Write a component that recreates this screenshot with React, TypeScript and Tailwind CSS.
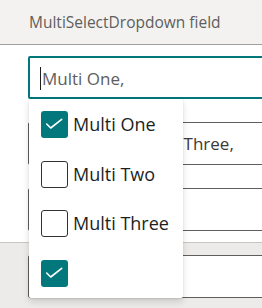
import * as React from "react";

type RowProps = {
    text?: string;
    focused?: boolean;
    indent?: string;
};

function Row({ text = "", focused = false, indent = "pl-[11px]" }: RowProps) {
    return (
        <div className="flex items-center">
            <div className="h-[40px] w-px bg-[#605e5c]" />
            <div
                className={
                    focused
                        ? "ml-[28px] flex h-[43px] w-[260px] shrink-0 items-center rounded-[2px] border-2 border-[#03787c] bg-white pl-[10px] pt-[3px]"
                        : "ml-[28px] flex h-[43px] w-[260px] shrink-0 items-center rounded-[2px] border border-[#605e5c] bg-white pt-[1px] " +
                          indent
                }
            >
                {focused && <span className="mb-[2px] h-[23px] w-px bg-[#201f1e]" />}
                <span
                    className={
                        focused
                            ? "ml-[1px] whitespace-nowrap text-[17px] text-[#605e5c]"
                            : "whitespace-nowrap text-[17px] text-[#3b3a39]"
                    }
                >
                    {text}
                </span>
            </div>
        </div>
    );
}

function Check({ checked, label }: { checked?: boolean; label?: string }) {
    return (
        <div className="flex h-[27px] items-center gap-[5px]">
            {checked ? (
                <div className="h-[27px] w-[27px] rounded-[3px] bg-[#03787c]">
                    <svg viewBox="0 0 27 27" className="h-[27px] w-[27px]" fill="none">
                        <path
                            d="M5.7 13 L9.7 17 L20.7 8.3"
                            stroke="white"
                            strokeWidth={1.6}
                            strokeLinecap="round"
                            strokeLinejoin="round"
                        />
                    </svg>
                </div>
            ) : (
                <div className="h-[27px] w-[27px] rounded-[3px] border border-[#323130] bg-white" />
            )}
            {label && (
                <span className="whitespace-nowrap text-[18px] text-[#201f1e]">{label}</span>
            )}
        </div>
    );
}

export default function App() {
    return (
        <div className="relative h-[308px] w-[262px] overflow-hidden bg-white font-['Open_Sans',sans-serif]">
            <div className="flex h-[45px] items-center border-b border-[#a19f9d] bg-[#f3f2f1] pl-[29px] pt-[1px] text-[15.5px] text-[#605e5c]">
                MultiSelectDropdown field
            </div>
            <div className="flex flex-col gap-[23px] pb-[11px] pt-[11px]">
                <Row focused text="Multi One," />
                <Row text="Multi One, Multi Three," indent="pl-[23px]" />
                <Row />
            </div>
            <div className="h-[66px] border-t border-[#c8c6c4] bg-[#edebe9] pt-[12px]">
                <Row />
            </div>

            {/* dropdown panel over the rows */}
            <div className="absolute left-[29px] top-[99px] flex h-[199px] w-[154px] flex-col gap-[22.67px] rounded-[2px] bg-white pl-[12px] pt-[12px] shadow-[0_3.2px_7.2px_rgba(0,0,0,0.13),0_0.6px_1.8px_rgba(0,0,0,0.11)]">
                <Check checked label="Multi One" />
                <Check label="Multi Two" />
                <Check label="Multi Three" />
                <Check checked />
            </div>
        </div>
    );
}
